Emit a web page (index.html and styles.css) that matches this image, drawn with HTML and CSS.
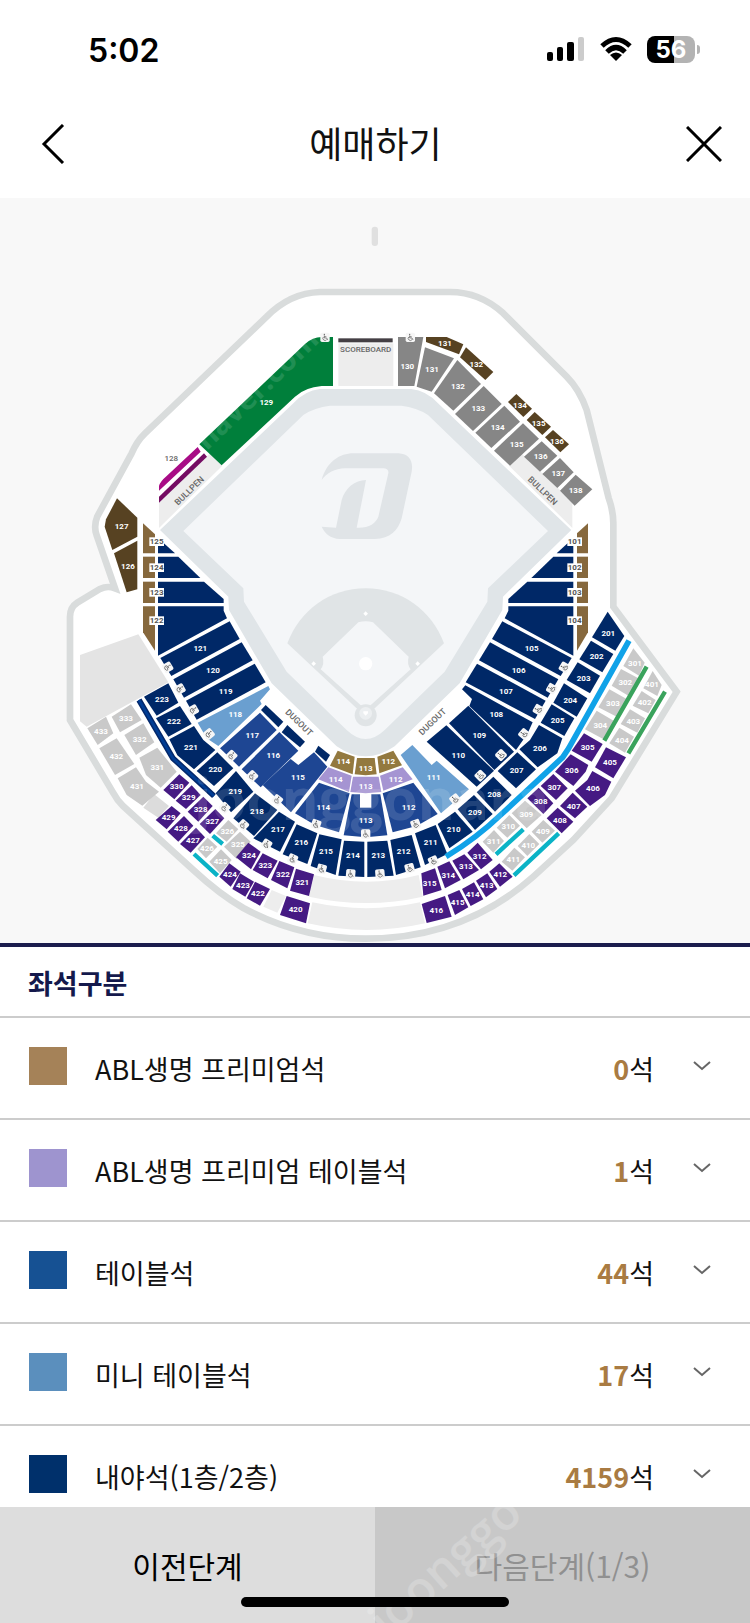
FILE: index.html
```
<!DOCTYPE html>
<html lang="ko">
<head>
	<meta charset="UTF-8">
	<meta name="viewport" content="width=device-width, initial-scale=1">
	<title>예매하기</title>
	<link rel="stylesheet" href="styles.css">
</head>
<body>
	<div id="app">
		<div class="status">
			<span class="clock">5:02</span>
			<div class="status-icons">
				<svg width="38" height="26" viewBox="0 0 38 26">
					<rect x="0" y="16" width="6" height="9" rx="2"/>
					<rect x="10" y="11" width="6" height="14" rx="2"/>
					<rect x="20" y="6" width="7" height="19" rx="2"/>
					<rect x="31" y="1" width="6" height="24" rx="2" fill="#ccc"/>
				</svg>
				<svg width="34" height="26" viewBox="0 0 34 26">
					<path d="M3 10 Q17 -3 31 10" fill="none" stroke="#000" stroke-width="5"/>
					<path d="M8 16 Q17 7 26 16" fill="none" stroke="#000" stroke-width="5"/>
					<path d="M17 25 L11 19 Q17 14 23 19 Z"/>
				</svg>
				<div class="battery"><span>56</span></div>
			</div>
		</div>
		<header>
			<button type="button" aria-label="뒤로">
				<svg width="24" height="40" viewBox="0 0 24 40"><path d="M22 1 L3 20 L22 39"/></svg>
			</button>
			<h1>예매하기</h1>
			<button type="button" aria-label="닫기">
				<svg width="36" height="36" viewBox="0 0 36 36"><path d="M1 1 L35 35 M35 1 L1 35"/></svg>
			</button>
		</header>

		<div class="map">
			<svg id="stadium" viewBox="0 0 2250 2235">
				<rect x="1115" y="86" width="19" height="58" rx="9" fill="#e0e0e0"/>

				<!-- outer wall -->
				<path class="wall" d="M960 282 H1350 Q1440 282 1510 346 L1700 536 Q1738 574 1760 636 L1826 900 Q1840 940 1840 976 V1226 L2030 1481 L1835 1801 L1720 1926 L1600 2036 Q1390 2222 1097 2222 Q900 2222 730 2130 Q660 2090 580 2016 L370 1825 Q350 1805 340 1785 L210 1566 V1256 Q210 1228 232 1214 L300 1173 Q322 1162 345 1171 L290 1012 Q280 985 292 955 L395 766 Q410 730 435 706 L800 356 Q870 285 960 282 Z"/>

				<!-- field -->
				<path fill="#e0e5e8" d="M960 573 H1234 Q1280 578 1314 616 L1714 996 L1509 1196 L1507 1236 L1379 1456 L1184 1645 Q1097 1705 1010 1645 L815 1456 L687 1236 L685 1196 L480 996 L880 616 Q914 578 960 573 Z"/>
				<path fill="#f4f6f8" d="M990 623 H1204 Q1250 628 1284 651 L1644 999 L1464 1171 L1462 1211 L1334 1421 L1154 1596 Q1097 1650 1040 1596 L860 1421 L732 1211 L730 1171 L550 999 L910 651 Q944 628 990 623 Z"/>
				<path fill="#ededed" d="M630 766 L667 803 L477 990 V911 Z M1564 766 L1527 803 L1717 990 V911 Z"/>
				<path fill="#e0e4e7" transform="translate(870 696)" d="M95 150 C110 95 150 70 190 70 H325 C360 72 370 95 365 125 L335 265 C325 300 300 327 255 327 H150 C120 325 105 310 95 290 L138 293 L155 210 C165 175 195 150 228 150 L200 293 C235 295 258 280 265 260 L295 130 C297 120 290 115 280 115 H165 C135 115 110 130 95 150 Z"/>
				<g transform="translate(750 1086)">
					<path fill="#e0e4e6" d="M112 250 C150 150 240 85 347 85 S544 150 582 250 L347 470 Z"/>
					<path fill="#f4f6f8" d="M325 187 Q347 180 369 187 L476 290 Q470 312 482 328 L360 437 H334 L212 328 Q224 312 218 290 Z"/>
					<circle cx="347" cy="466" r="33" fill="#e0e4e6"/>
					<circle cx="347" cy="460" r="19" fill="#eceff1"/>
					<circle cx="347" cy="311" r="20" fill="#fff"/>
					<path fill="#fff" d="M347 154 l7 7 l-7 7 l-7 -7 Z M191 304 l7 7 l-7 7 l-7 -7 Z M503 304 l7 7 l-7 7 l-7 -7 Z M340 454 h14 v6 l-7 7 l-7 -7 Z"/>
				</g>

				<!-- scoreboard and empty blocks -->
				<rect x="1015" y="421" width="163" height="12" fill="#443f44"/>
				<rect x="1015" y="436" width="165" height="128" fill="#ededed"/>
				<path fill="#e4e4e4" d="M240 1371 L415 1309 L505 1453 L260 1586 L240 1570 Z"/>
				<path fill="#dcdcdc" d="M462 1788 L507 1824 L475 1859 L430 1829 Z"/>
				<g transform="translate(540 1626)" fill="#ededed">
					<path d="M402 405 Q560 445 716 405 L728 470 Q560 508 387 470 Z"/>
					<path d="M397 487 Q560 522 720 487 L735 550 Q560 590 383 550 Z"/>
					<path d="M275 450 L318 468 L292 518 L250 500 Z"/>
				</g>
				<path fill="#007f3b" d="M598 739 L915 438 Q938 417 965 417 H999 V564 H965 Q915 568 885 596 L665 802 Z"/>
				<path fill="#a80c86" d="M593 747 L602 761 L477 878 V864 Q480 851 500 834 Z"/>
				<path fill="#750d63" d="M612 766 L621 776 L477 914 V896 Z"/>

				<g id="sections"></g>

				<g class="strips">
					<path stroke="#04286b" stroke-width="17" d="M417 1506 L519 1681 L642 1794"/>
					<path stroke="#003d94" stroke-width="8" d="M417 1506 L519 1681 L642 1794"/>
					<path stroke="#10a2e8" stroke-width="17" d="M1887 1328 L1706 1651 L1688 1678 L1505 1848 Q1430 1920 1338 1976"/>
					<path stroke="#3aa35c" stroke-width="13" d="M1940 1406 L1813 1628 M1995 1481 L1885 1666"/>
					<path stroke="#0bb3c6" stroke-width="13" d="M1570 1894 L1488 1969 M1676 1906 L1542 2032 M638 1913 L668 1938 M582 1968 L653 2033"/>
				</g>

				<g id="chairs"></g>

				<g class="names">
					<text class="small" x="1097" y="461">SCOREBOARD</text>
					<text transform="translate(568 878) rotate(-44)" y="9">BULLPEN</text>
					<text transform="translate(1628 878) rotate(44)" y="9">BULLPEN</text>
					<text transform="translate(897 1573) rotate(44)" y="9">DUGOUT</text>
					<text transform="translate(1297 1571) rotate(-44)" y="9">DUGOUT</text>
					<text class="small" x="514" y="788">128</text>
				</g>

				<g class="mark" aria-hidden="true">
					<text class="big" x="1115" y="1866">joonggonara</text>
					<text transform="translate(620 760) rotate(-44)">naver.com</text>
				</g>
			</svg>
		</div>

		<h2>좌석구분</h2>
		<ul id="grades">
			<li>
				<i class="premium"></i><span class="name">ABL생명 프리미엄석</span>
				<span class="count"><b>0</b>석</span>
				<button type="button" aria-label="펼치기"><svg width="18" height="10" viewBox="0 0 18 10"><path d="M1 1 L9 8 L17 1"/></svg></button>
			</li>
			<li>
				<i class="premium-table"></i><span class="name">ABL생명 프리미엄 테이블석</span>
				<span class="count"><b>1</b>석</span>
				<button type="button" aria-label="펼치기"><svg width="18" height="10" viewBox="0 0 18 10"><path d="M1 1 L9 8 L17 1"/></svg></button>
			</li>
			<li>
				<i class="table"></i><span class="name">테이블석</span>
				<span class="count"><b>44</b>석</span>
				<button type="button" aria-label="펼치기"><svg width="18" height="10" viewBox="0 0 18 10"><path d="M1 1 L9 8 L17 1"/></svg></button>
			</li>
			<li>
				<i class="mini-table"></i><span class="name">미니 테이블석</span>
				<span class="count"><b>17</b>석</span>
				<button type="button" aria-label="펼치기"><svg width="18" height="10" viewBox="0 0 18 10"><path d="M1 1 L9 8 L17 1"/></svg></button>
			</li>
			<li>
				<i class="infield"></i><span class="name">내야석(1층/2층)</span>
				<span class="count"><b>4159</b>석</span>
				<button type="button" aria-label="펼치기"><svg width="18" height="10" viewBox="0 0 18 10"><path d="M1 1 L9 8 L17 1"/></svg></button>
			</li>
		</ul>

		<footer>
			<button type="button">이전단계</button>
			<button type="button" disabled>다음단계(1/3)</button>
			<span class="footer-mark" aria-hidden="true">joonggo</span>
			<div class="home-bar"></div>
		</footer>
	</div>
	<script src="seatmap.js"></script>
</body>
</html>
```
FILE: styles.css
```
* {
	margin: 0;
	padding: 0;
	box-sizing: border-box;
}
body {
	background-color: #fff;
	color: #111;
	font-family: "Noto Sans CJK KR", sans-serif;
}
button {
	border: none;
	background: none;
	font-family: inherit;
}
svg {
	display: block;
}
#app {
	height: 100vh;
	display: flex;
	flex-direction: column;
}
.status {
	flex: none;
	height: 98px;
	padding: 0 55px 0 88px;
	display: flex;
	align-items: center;
	justify-content: space-between;
	color: #000;
	font-family: Inter, sans-serif;
}
.clock {
	padding-top: 2px;
	font-size: 32px;
	font-weight: 600;
}
.status-icons {
	display: flex;
	align-items: center;
	gap: 14px;
}
.battery {
	position: relative;
	width: 48px;
	height: 27px;
	border-radius: 8px;
	background: linear-gradient(90deg, #000 56%, #b3b3b3 56%);
	color: #fff;
	font-size: 24px;
	font-weight: 700;
	line-height: 27px;
	text-align: center;
}
.battery::after {
	content: "";
	position: absolute;
	left: 50px;
	top: 9px;
	width: 3px;
	height: 9px;
	border-radius: 0 3px 3px 0;
	background-color: #b3b3b3;
}
header {
	flex: none;
	height: 100px;
	padding: 0 28px 8px 41px;
	display: flex;
	align-items: center;
	justify-content: space-between;
}
header svg {
	fill: none;
	stroke: #000;
	stroke-width: 3px;
}
header h1 {
	padding-bottom: 5px;
	font-size: 36px;
	font-weight: 400;
	line-height: 52px;
}
.map {
	flex: none;
	background-color: #f8f8f8;
	border-bottom: 4px solid #1b1d4d;
}
.wall {
	fill: #fff;
	stroke: #d9dcdc;
	stroke-width: 20px;
}
#stadium text {
	text-anchor: middle;
	font-family: Roboto, sans-serif;
	font-weight: 700;
	font-size: 24px;
	fill: #fff;
}
#stadium .names text {
	font-size: 26px;
	font-weight: 500;
	fill: #666;
}
#stadium .names .small {
	font-size: 24px;
}
#stadium .boxed {
	fill: #555;
}
.strips path {
	fill: none;
}
#stadium .mark text {
	text-anchor: start;
	font-family: "Open Sans", sans-serif;
	font-size: 90px;
	opacity: .12;
}
#stadium .mark .big {
	text-anchor: middle;
	font-size: 170px;
}
.navy { fill: #002867; }
.blue { fill: #1e4693; }
.sky { fill: #6a9fd0; }
.tan { fill: #86683d; }
.gold { fill: #93793f; }
.lilac { fill: #a594d2; }
.brown { fill: #574222; }
.gray { fill: #868686; }
.off { fill: #c9c9c9; }
.purple { fill: #451a83; }

h2 {
	flex: none;
	height: 71px;
	padding-left: 28px;
	border-bottom: 2px solid #ccc;
	color: #14194c;
	font-size: 27px;
	font-weight: 700;
	line-height: 71px;
}
#grades {
	flex: 1;
	min-height: 0;
	overflow-y: auto;
	scrollbar-width: none;
	list-style-type: none;
}
#grades li {
	height: 102px;
	padding: 0 39px 4px 29px;
	display: flex;
	align-items: center;
	border-bottom: 2px solid #ccc;
	font-size: 27px;
}
#grades i {
	width: 38px;
	height: 38px;
}
#grades .name {
	flex: 1;
	margin-left: 28px;
	padding-top: 4px;
}
#grades .count {
	margin-right: 39px;
	padding-top: 4px;
}
#grades b {
	color: #a97b42;
	font-weight: 700;
}
#grades svg {
	fill: none;
	stroke: #666;
	stroke-width: 2px;
}
.premium { background-color: #a58258; }
.premium-table { background-color: #9e94cf; }
.table { background-color: #165193; }
.mini-table { background-color: #5b8fbd; }
.infield { background-color: #00306b; }

footer {
	position: relative;
	flex: none;
	height: 116px;
	display: flex;
	overflow: hidden;
}
footer button {
	flex: 1;
	background-color: #ddd;
	color: #000;
	font-size: 30px;
}
footer button:disabled {
	background-color: #c8c8c8;
	color: #909090;
}
.footer-mark {
	position: absolute;
	left: 50%;
	bottom: -36px;
	color: #fff;
	opacity: .2;
	font-family: "Open Sans", sans-serif;
	font-size: 48px;
	font-weight: 600;
	transform: rotate(-42deg);
	transform-origin: 0 50%;
	pointer-events: none;
}
.home-bar {
	position: absolute;
	left: 50%;
	bottom: 16px;
	width: 268px;
	height: 10px;
	margin-left: -134px;
	border-radius: 5px;
	background-color: #000;
}
```
FILE: seatmap.js
```
const NS = 'http://www.w3.org/2000/svg'
const sections = document.querySelector('#sections')
const chairs = document.querySelector('#chairs')

// each area has its own origin; a seat is [color, number, points, label x, label y]
const areas = [
	{ x: 1110, y: 246, seats: [
		['gray', '130', '84,171 160,171 133,318 84,318', 112, 258],
		['gray', '131', '165,202 252,235 185,335 140,320', 186, 268],
		['gray', '132', '262,240 333,312 250,392 192,340', 264, 318],
		['gray', '133', '341,318 395,372 309,453 255,402'],
		['gray', '134', '403,377 450,425 364,504 316,458'],
		['gray', '135', '459,430 507,476 420,557 372,512'],
		['gray', '136', '515,484 562,527 510,575 462,530'],
		['gray', '137', '570,534 611,577 562,624 517,582'],
		['gray', '138', '617,584 667,628 614,677 570,632'],
		['brown', '131', '168,171 230,171 280,193 267,223 168,186', 225, 190],
		['brown', '132', '288,202 370,276 346,300 270,232'],
		['brown', '134', '439,342 486,386 460,411 414,366'],
		['brown', '135', '494,396 543,440 517,465 470,420'],
		['brown', '136', '549,450 597,493 571,517 525,472']
	] },
	{ x: 180, y: 846, seats: [
		['brown', '127', '171,55 232,113 232,170 157,210 134,140 138,118', 185, 140],
		['brown', '126', '232,182 232,328 200,337 162,220', 204, 258],
		['tan', '', '249,130 285,163 285,220 249,220'],
		['tan', '', '249,230 285,230 285,294 249,294'],
		['tan', '', '249,305 285,305 285,369 249,369'],
		['tan', '', '249,379 285,379 285,512 249,457'],
		['navy', '', '294,174 345,220 294,220'],
		['navy', '', '294,230 355,230 421,294 294,294'],
		['navy', '', '294,305 432,305 491,357 491,369 294,369'],
		['navy', '', '294,379 491,379 491,392 501,415 294,527'],
		['navy', '121', '509,424 539,477 334,588 301,534'],
		['navy', '120', '545,487 578,541 372,653 340,598'],
		['navy', '119', '584,551 617,607 410,719 378,662']
	], boxed: [['125', 290, 185], ['124', 290, 263], ['123', 290, 337], ['122', 290, 422]] },
	{ x: 1320, y: 846, seats: [
		['tan', '', '444,130 411,160 411,220 444,220'],
		['tan', '', '411,230 444,230 444,294 411,294'],
		['tan', '', '411,305 444,305 444,369 411,369'],
		['tan', '', '411,379 444,379 444,457 411,512'],
		['navy', '', '400,174 350,220 400,220'],
		['navy', '', '340,230 400,230 400,294 274,294'],
		['navy', '', '262,305 400,305 400,369 205,369 205,357'],
		['navy', '', '205,379 400,379 400,527 194,415 205,392'],
		['navy', '105', '187,424 395,534 362,588 156,477'],
		['navy', '106', '150,487 355,598 323,653 117,541'],
		['navy', '107', '111,551 317,662 285,717 77,607'],
		['navy', '201', '503,395 553,468 526,512 456,472', 505, 461],
		['navy', '202', '453,482 520,522 487,577 418,538'],
		['navy', '203', '413,547 480,587 450,640 380,600'],
		['off', '301', '580,505 614,548 597,587 550,558'],
		['off', '302', '543,567 595,595 570,650 515,617'],
		['off', '303', '508,628 560,657 533,712 475,682']
	], boxed: [['101', 404, 185], ['102', 404, 263], ['103', 404, 337], ['104', 404, 422]] },
	{ x: 180, y: 1386, seats: [
		['sky', '118', '625,78 630,88 600,122 605,132 475,258 440,235 413,188', 526, 163],
		['blue', '117', '600,158 650,210 537,320 480,265', 577, 225],
		['blue', '116', '658,216 715,272 602,382 545,328', 640, 286],
		['navy', '', '617,135 670,185 655,202 603,150'],
		['navy', '', '682,195 735,245 720,262 665,217'],
		['navy', '223', '325,70 355,128 290,167 252,110'],
		['navy', '222', '360,138 395,192 325,230 288,175'],
		['navy', '221', '402,198 430,240 466,270 402,328 352,286 328,238', 393, 262],
		['navy', '220', '472,277 520,325 462,378 410,333'],
		['navy', '219', '528,333 580,395 513,457 467,400', 526, 395],
		['off', '433', '82,205 138,170 160,220 113,255'],
		['off', '333', '155,170 213,133 245,180 180,217'],
		['off', '332', '193,225 250,190 283,247 228,285'],
		['off', '331', '238,293 292,263 350,335 302,383 258,345', 292, 323],
		['off', '432', '118,265 170,235 223,312 165,345'],
		['off', '431', '173,355 228,322 258,365 297,395 247,437 200,405', 231, 380],
		['purple', '330', '358,343 388,368 343,418 310,390'],
		['purple', '329', '395,376 422,405 378,447 347,422'],
		['purple', '328', '430,410 458,438 415,485 383,455'],
		['purple', '327', '466,447 493,475 450,522 419,492'],
		['off', '326', '505,480 535,508 500,545 468,520'],
		['off', '325', '540,515 572,545 530,597 492,560'],
		['purple', '429', '335,438 362,460 320,508 287,480'],
		['purple', '428', '372,468 400,497 355,545 323,515'],
		['purple', '427', '408,503 435,532 392,578 360,552'],
		['off', '426', '443,533 472,560 438,595 412,567'],
		['off', '425', '483,568 515,600 480,640 448,605']
	] },
	{ x: 540, y: 1626, seats: [
		['navy', '', '415,17 450,45 438,65 405,35'],
		['blue', '115', '248,135 332,57 355,75 402,37 442,80 333,217', 354, 112],
		['blue', '114', '417,128 509,160 477,277 405,255 345,220', 430, 203],
		['blue', '113', '515,163 601,163 622,286 558,292 491,286', 557, 240],
		['blue', '112', '608,160 700,128 773,222 710,258 638,277', 686, 203],
		['sky', '111', '662,45 697,15 755,75 770,62 867,148 783,220', 761, 112],
		['gold', '114', '473,32 524,50 518,103 450,77', 490, 65],
		['gold', '113', '531,54 584,54 590,103 557,106 524,103'],
		['gold', '112', '592,50 640,32 666,76 598,100', 625, 65],
		['lilac', '114', '445,82 515,107 507,156 415,118', 467, 117],
		['lilac', '113', '519,110 596,110 604,156 557,160 511,156'],
		['lilac', '112', '600,107 668,82 698,118 610,152', 647, 117],
		['navy', '110', '799,-44 942,92 890,140 740,5', 835, 47],
		['navy', '218', '225,160 292,210 222,288 160,235', 231, 213],
		['navy', '217', '297,215 345,245 300,335 220,295', 294, 267],
		['navy', '216', '350,253 412,280 382,372 308,343', 364, 307],
		['navy', '215', '418,283 485,298 467,405 392,378', 438, 333],
		['navy', '214', '492,302 553,305 553,411 475,407', 519, 345],
		['navy', '213', '562,305 622,302 641,407 562,411', 595, 345],
		['navy', '212', '631,300 695,285 722,382 648,405', 671, 333],
		['navy', '211', '705,280 767,255 802,342 735,375', 752, 307],
		['navy', '210', '773,252 825,215 878,275 808,325'],
		['navy', '209', '833,208 882,165 938,222 885,270'],
		['navy', '208', '890,157 940,110 995,165 945,215'],
		['purple', '321', '348,386 402,403 387,468 330,452'],
		['purple', '322', '298,363 343,382 322,445 273,420'],
		['purple', '323', '248,340 293,362 263,415 218,390'],
		['purple', '324', '205,308 242,335 213,388 168,352'],
		['purple', '420', '320,468 390,490 378,550 300,525'],
		['purple', '422', '225,425 270,447 240,497 200,475'],
		['purple', '423', '180,400 222,425 196,470 157,447'],
		['purple', '424', '148,370 182,395 152,440 118,410'],
		['purple', '312', '893,308 938,360 903,388 862,338'],
		['purple', '313', '853,343 897,390 850,418 817,362', 858, 380],
		['purple', '314', '808,364 842,420 795,445 772,380', 805, 406],
		['purple', '315', '724,400 765,385 785,450 730,467', 749, 430],
		['purple', '416', '725,492 795,468 815,530 740,549'],
		['purple', '415', '803,465 838,450 865,502 825,525'],
		['purple', '414', '846,447 882,427 910,478 872,498'],
		['purple', '413', '888,422 922,400 952,447 918,472'],
		['purple', '412', '928,395 958,370 998,410 960,440']
	] },
	{ x: 1350, y: 1386, seats: [
		['navy', '108', '46,76 248,187 232,222 198,270 58,138 66,117 36,88', 139, 164],
		['navy', '109', '55,137 192,275 133,330 -3,190', 88, 227],
		['navy', '207', '202,277 258,328 198,385 143,333'],
		['navy', '206', '267,195 337,235 322,280 263,322 208,268 240,240', 270, 265],
		['navy', '205', '305,133 373,175 343,228 272,188'],
		['navy', '204', '342,70 412,115 380,170 310,128'],
		['off', '304', '440,152 492,183 465,240 405,208'],
		['off', '401', '608,33 635,75 622,108 580,85', 606, 74],
		['off', '402', '575,93 617,120 595,160 548,137'],
		['off', '403', '540,148 585,175 562,218 512,192'],
		['off', '404', '508,203 552,230 525,278 478,250'],
		['purple', '305', '402,220 458,252 425,305 365,272'],
		['purple', '306', '362,283 415,315 407,335 370,378 315,335', 365, 332],
		['purple', '307', '310,342 353,385 318,420 272,378'],
		['purple', '308', '266,383 310,430 280,462 232,415'],
		['off', '309', '225,422 275,465 230,505 185,460'],
		['off', '310', '178,465 210,497 172,533 140,503'],
		['off', '311', '132,510 162,543 130,578 98,545'],
		['purple', '405', '468,262 528,292 490,355 435,322'],
		['purple', '406', '427,333 484,365 465,405 420,438 375,392 412,360', 429, 386],
		['purple', '407', '368,398 412,440 375,475 330,438'],
		['purple', '408', '323,443 370,485 335,520 290,475'],
		['off', '409', '280,480 315,512 277,548 245,515'],
		['off', '410', '238,522 268,552 232,588 203,558'],
		['off', '411', '193,563 225,592 187,632 155,605']
	] }
]

// wheelchair seats: x, y, angle
const wheelchairs = [
	[503, 1408, 60], [540, 1473, 60], [580, 1536, 60], [627, 1608, 50],
	[695, 1673, 45], [757, 1734, 45], [832, 1806, 38], [674, 1829, 45],
	[730, 1881, 42], [800, 1939, 33], [878, 1983, 25], [965, 2013, 15],
	[1052, 2028, 5], [1140, 2028, -5], [1229, 2011, -15], [1300, 1989, -25],
	[948, 1879, 20], [1097, 1908, 0], [1247, 1879, -20], [1365, 1804, -38],
	[1441, 1733, -45], [1503, 1671, -45], [1572, 1608, -50], [1615, 1535, -60],
	[1655, 1472, -60], [1693, 1408, -60], [975, 418, 0], [1231, 418, 0]
]

function add(parent, tag, attrs, text) {
	let el = document.createElementNS(NS, tag)
	for (let key in attrs) {
		el.setAttribute(key, attrs[key])
	}
	if (text) {
		el.textContent = text
	}
	parent.appendChild(el)
	return el
}

function center(points) {
	let list = points.split(' ').map((p) => p.split(',').map(Number))
	return [0, 1].map((i) => Math.round(list.reduce((sum, p) => sum + p[i], 0) / list.length))
}

areas.forEach((area) => {
	let g = add(sections, 'g', { transform: `translate(${area.x} ${area.y})` })
	area.seats.forEach(([color, label, points, lx, ly]) => {
		add(g, 'polygon', { class: color, points: points })
		if (label) {
			let [x, y] = lx ? [lx, ly] : center(points)
			add(g, 'text', { x: x, y: y + 8 }, label)
		}
	})
	let boxed = area.boxed || []
	boxed.forEach(([label, x, y]) => {
		add(g, 'rect', { x: x - 22, y: y - 13, width: 44, height: 26, fill: '#fff' })
		add(g, 'text', { class: 'boxed', x: x, y: y + 8 }, label)
	})
})
add(sections, 'text', { x: 799, y: 620 }, '129')
// walkway in front of 113
add(sections, 'rect', { x: 1080, y: 1788, width: 34, height: 41, fill: '#fff' })

wheelchairs.forEach(([x, y, angle]) => {
	let g = add(chairs, 'g', { transform: `translate(${x} ${y}) rotate(${angle})` })
	add(g, 'rect', { x: -14, y: -14, width: 28, height: 28, rx: 5, fill: '#f6f6f6' })
	add(g, 'circle', { cx: -2, cy: -9, r: 2, fill: '#555' })
	add(g, 'path', { d: 'M-2 -6 V2 H5 L8 8 M-2 -2 H4 M-5 -1 A6 6 0 1 0 5 7', fill: 'none', stroke: '#555', 'stroke-width': 2 })
})
```
